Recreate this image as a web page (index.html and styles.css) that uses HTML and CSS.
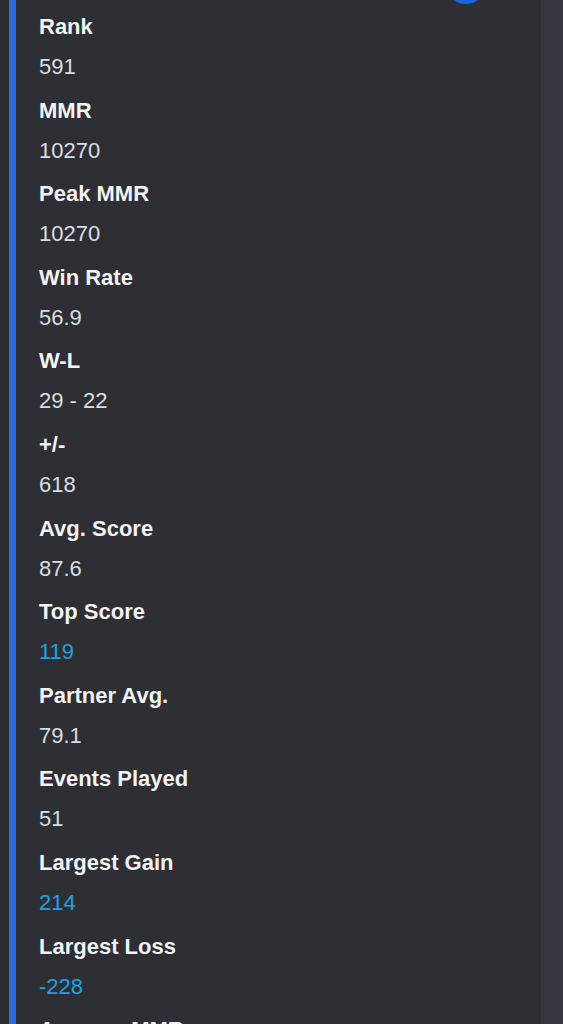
FILE: index.html
```html
<!DOCTYPE html>
<html>
<head>
<meta charset="utf-8">
<link rel="stylesheet" href="styles.css">
</head>
<body>
<div class="page">
  <div class="gutter"></div>
  <div class="bar"></div>
  <div class="embed">
    <div class="thumb"></div>
    <div class="field"><div class="name">Rank</div><div class="value">591</div></div>
    <div class="field"><div class="name">MMR</div><div class="value">10270</div></div>
    <div class="field"><div class="name">Peak MMR</div><div class="value">10270</div></div>
    <div class="field"><div class="name">Win Rate</div><div class="value">56.9</div></div>
    <div class="field"><div class="name">W-L</div><div class="value">29 - 22</div></div>
    <div class="field"><div class="name">+/-</div><div class="value">618</div></div>
    <div class="field"><div class="name">Avg. Score</div><div class="value">87.6</div></div>
    <div class="field"><div class="name">Top Score</div><div class="value link">119</div></div>
    <div class="field"><div class="name">Partner Avg.</div><div class="value">79.1</div></div>
    <div class="field"><div class="name">Events Played</div><div class="value">51</div></div>
    <div class="field"><div class="name">Largest Gain</div><div class="value link">214</div></div>
    <div class="field"><div class="name">Largest Loss</div><div class="value link">-228</div></div>
    <div class="field"><div class="name">Average MMR</div><div class="value">9500</div></div>
  </div>
  <div class="side"></div>
</div>
</body>
</html>
```
FILE: styles.css
```css
html, body {
  margin: 0;
  padding: 0;
  background: #2b2d31;
  overflow: hidden;
}
.page {
  display: flex;
  width: 563px;
  height: 1024px;
  overflow: hidden;
  font-family: "Liberation Sans", Arial, sans-serif;
}
.gutter {
  width: 9px;
  flex: none;
  background: #2a2c30;
}
.bar {
  width: 7px;
  flex: none;
  background: #2c6fd8;
}
.embed {
  position: relative;
  flex: 1;
  background: #2e2f34;
  padding: 7px 0 0 23px;
}
.thumb {
  position: absolute;
  left: 434px;
  top: -20px;
  width: 32px;
  height: 24px;
  border-radius: 50%;
  background: #1f63d8;
}
.side {
  width: 22px;
  flex: none;
  background: #363840;
}
.field {
  display: flex;
  flex-direction: column;
}
.name {
  font-size: 22px;
  font-weight: bold;
  line-height: 40px;
  color: #f2f3f5;
}
.value {
  font-size: 22px;
  line-height: 40px;
  padding-bottom: 3.6px;
  color: #dbdee1;
}
.value.link {
  color: #1ea3e0;
}
```
